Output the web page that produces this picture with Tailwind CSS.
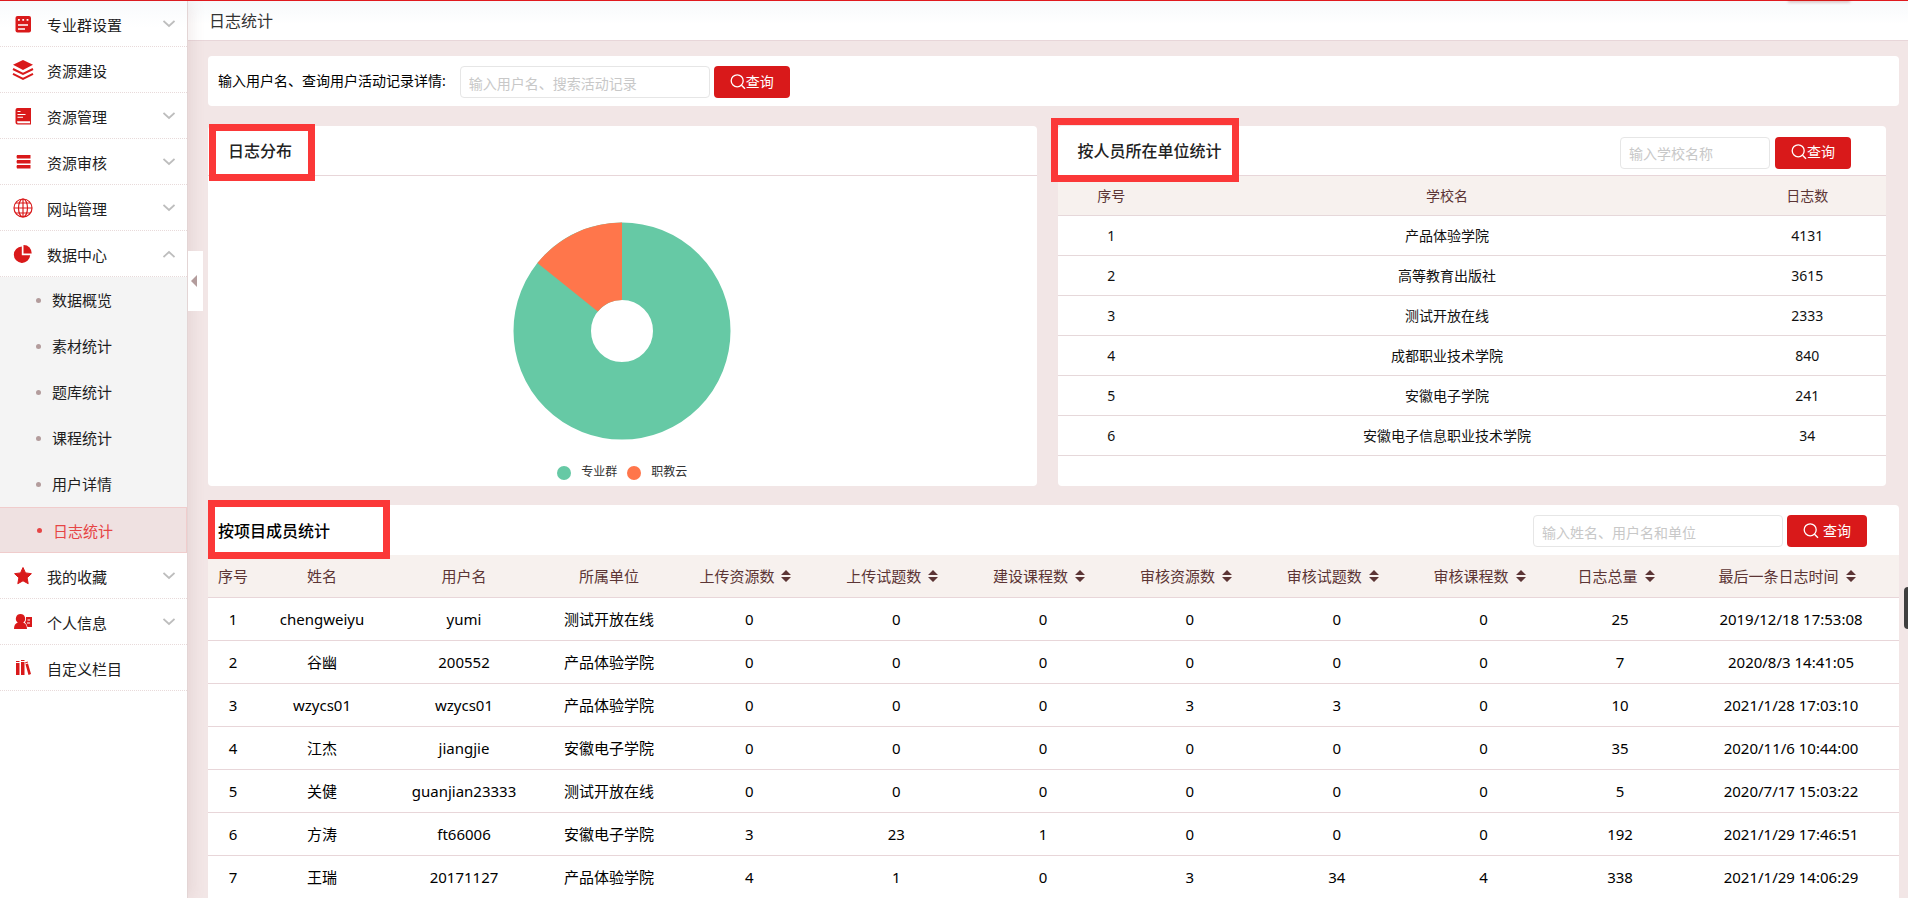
<!DOCTYPE html>
<html lang="zh-CN">
<head>
<meta charset="utf-8">
<meta name="viewport" content="width=device-width, initial-scale=1">
<title>日志统计</title>
<script src="https://cdn.jsdelivr.net/npm/@tailwindcss/browser@4"></script>
</head>
<body class="flex h-screen flex-col overflow-hidden bg-[#f2e6e6] font-['Noto_Sans','Noto_Sans_CJK_SC',sans-serif] text-[15px] text-black">
<svg class="hidden" aria-hidden="true">
  <symbol id="down" viewBox="0 0 12 8"><path d="M.5 1 6 6l5.500-5" fill="none" stroke="#bdbdbd" stroke-width="1.700"/></symbol>
  <symbol id="up" viewBox="0 0 12 8"><path d="M.5 7 6 2l5.500 5" fill="none" stroke="#bdbdbd" stroke-width="1.700"/></symbol>
  <symbol id="search" viewBox="0 0 16 16"><circle cx="7.200" cy="6.800" r="6" fill="none" stroke="currentColor" stroke-width="1.300"/><path d="m11.500 11.200 3.500 3.500" stroke="currentColor" stroke-width="1.400"/></symbol>
  <symbol id="sort" viewBox="0 0 10 12"><path d="M5 0l5 5H0zM5 12l5-5H0z" fill="#5c3535"/></symbol>
</svg>
<div class="relative z-10 h-px shrink-0 bg-[#e0191e]">
  <div class="absolute top-0 right-[58px] h-px w-[62px] bg-[#d71718] shadow-[0_1px_3px_rgba(120,20,20,0.6)]"></div>
</div>
<div class="flex min-h-0 flex-1">
  <aside class="relative z-10 w-[188px] shrink-0 border-r border-[#e3d5d5] bg-white bg-linear-to-b from-[#f8fafc] to-white to-3% shadow-[3px_0_14px_rgba(150,90,90,0.12)]">
    <nav class="[&_a]:text-[#1e1e1e]">
      <a href="#" class="flex h-[46px] items-center border-b border-dotted border-[#e8dada] pr-3 pl-3">
        <svg class="h-[22px] w-[22px]" viewBox="0 0 22 22"><rect x="3.500" y="3" width="15.500" height="16.500" rx="2" fill="#d9191a"/><path d="M6 6.800h1.800M10.300 6.800h1.800M14.600 6.800h1.800" stroke="#fff" stroke-width="1.800"/><path d="M6 12h10M6 16h7" stroke="#fff" stroke-width="1.300"/></svg>
        <span class="ml-[13px] flex-1 pt-1">专业群设置</span><svg class="h-2 w-3"><use href="#down"/></svg>
      </a>
      <a href="#" class="flex h-[46px] items-center border-b border-dotted border-[#e8dada] pr-3 pl-3">
        <svg class="h-[22px] w-[22px]" viewBox="0 0 22 22"><path d="M11 1l10 4.800L11 11 1 5.800z" fill="#d9191a"/><path d="M1 10l10 5 10-5M1 14.800l10 5 10-5" fill="none" stroke="#d9191a" stroke-width="2"/></svg>
        <span class="ml-[13px] flex-1 pt-1">资源建设</span>
      </a>
      <a href="#" class="flex h-[46px] items-center border-b border-dotted border-[#e8dada] pr-3 pl-3">
        <svg class="h-[22px] w-[22px]" viewBox="0 0 22 22"><path d="M5.500 3H19v16.500H5.500A2 2 0 0 1 3.500 17.500V5a2 2 0 0 1 2-2z" fill="#d9191a"/><path d="M5.500 6.500h3M5.500 9.500h8M5.500 12.300h5.500" stroke="#fff" stroke-width="1.100"/><path d="M5 16.300h13v2H5.500z" fill="#fff"/></svg>
        <span class="ml-[13px] flex-1 pt-1">资源管理</span><svg class="h-2 w-3"><use href="#down"/></svg>
      </a>
      <a href="#" class="flex h-[46px] items-center border-b border-dotted border-[#e8dada] pr-3 pl-3">
        <svg class="h-[22px] w-[22px]" viewBox="0 0 22 22"><path d="M5 4h13.500v3.500H5q-1-1.700 0-3.500zM5 9h13.500v3.500H5q-1-1.700 0-3.500zM5 14h13.500v3.500H5q-1-1.700 0-3.500z" fill="#d9191a"/></svg>
        <span class="ml-[13px] flex-1 pt-1">资源审核</span><svg class="h-2 w-3"><use href="#down"/></svg>
      </a>
      <a href="#" class="flex h-[46px] items-center border-b border-dotted border-[#e8dada] pr-3 pl-3">
        <svg class="h-[22px] w-[22px]" viewBox="0 0 22 22" fill="none" stroke="#d9191a" stroke-width="1.200"><circle cx="11" cy="11" r="9"/><ellipse cx="11" cy="11" rx="4.500" ry="9"/><path d="M11 2v18M2 11h18M4 6h14M4 16h14"/></svg>
        <span class="ml-[13px] flex-1 pt-1">网站管理</span><svg class="h-2 w-3"><use href="#down"/></svg>
      </a>
      <a href="#" class="flex h-[46px] items-center border-b border-dotted border-[#e8dada] pr-3 pl-3">
        <svg class="h-[22px] w-[22px]" viewBox="0 0 22 22" fill="#d9191a"><path d="M9.800 3.500v8.800h8.400A8.200 8.200 0 1 1 9.800 3.500z"/><path d="M11.500 2a8 8 0 0 1 8.200 8.600h-8.200z"/></svg>
        <span class="ml-[13px] flex-1 pt-1">数据中心</span><svg class="h-2 w-3"><use href="#up"/></svg>
      </a>
      <div class="bg-[#f4f4f4]">
        <a href="#" class="flex h-[46px] items-center gap-[11px] pl-9"><i class="size-[5px] rounded-full bg-[#b39c9c]"></i><span>数据概览</span></a>
        <a href="#" class="flex h-[46px] items-center gap-[11px] pl-9"><i class="size-[5px] rounded-full bg-[#b39c9c]"></i><span>素材统计</span></a>
        <a href="#" class="flex h-[46px] items-center gap-[11px] pl-9"><i class="size-[5px] rounded-full bg-[#b39c9c]"></i><span>题库统计</span></a>
        <a href="#" class="flex h-[46px] items-center gap-[11px] pl-9"><i class="size-[5px] rounded-full bg-[#b39c9c]"></i><span>课程统计</span></a>
        <a href="#" class="flex h-[46px] items-center gap-[11px] pl-9"><i class="size-[5px] rounded-full bg-[#b39c9c]"></i><span>用户详情</span></a>
        <a href="#" aria-current="page" class="flex h-[46px] items-center gap-[11px] border border-l-0 border-[#f0cccc] bg-[#efe1e1] pl-[37px]"><i class="size-[5px] rounded-full bg-[#e64545]"></i><span class="pt-0.5 text-[#e64545]">日志统计</span></a>
      </div>
      <a href="#" class="flex h-[46px] items-center border-b border-dotted border-[#e8dada] pr-3 pl-3">
        <svg class="h-[22px] w-[22px]" viewBox="0 0 22 22"><path d="M11 2.500l2.500 5.400 5.900.8-4.300 4.100 1.100 5.900-5.200-2.900-5.200 2.900 1.100-5.900-4.300-4.100 5.900-.8z" fill="#d9191a" stroke="#d9191a" stroke-linejoin="round"/></svg>
        <span class="ml-[13px] flex-1 pt-1">我的收藏</span><svg class="h-2 w-3"><use href="#down"/></svg>
      </a>
      <a href="#" class="flex h-[46px] items-center border-b border-dotted border-[#e8dada] pr-3 pl-3">
        <svg class="h-[22px] w-[22px]" viewBox="0 0 22 22" fill="#d9191a"><path d="M8.500 3a4.700 4.700 0 0 1 2.700 8.500c2.600 1 3.800 3 3.800 6.500H2c0-3.500 1.200-5.500 3.800-6.500A4.700 4.700 0 0 1 8.500 3z"/><path d="M14 6h6v10h-4.500q-.6-3-2.500-4.500Q14.500 9 14 6z"/><path d="M15.500 9H18M15 12h3" stroke="#fff" stroke-width="1.200"/></svg>
        <span class="ml-[13px] flex-1 pt-1">个人信息</span><svg class="h-2 w-3"><use href="#down"/></svg>
      </a>
      <a href="#" class="flex h-[46px] items-center border-b border-dotted border-[#e8dada] pr-3 pl-3">
        <svg class="h-[22px] w-[22px]" viewBox="0 0 22 22" fill="#d9191a"><path d="M4 4h3.500v1H4zM4 6h3.500v12H4zM9 3h3.500v1H9zM9 5h3.500v13H9zM13 5.500l2.700-1 .3 1-2.700 1zM13.500 7.300l2.500-.9 3 10.600-2.500.9z"/></svg>
        <span class="ml-[13px] flex-1 pt-1">自定义栏目</span>
      </a>
    </nav>
    <button aria-label="收起菜单" class="absolute top-[250px] -right-4 flex h-[60px] w-[15px] items-center bg-white pl-[3px]"><svg class="h-3 w-1.5" viewBox="0 0 6 12"><path d="M6 0v12L0 6z" fill="#b39c9c"/></svg></button>
  </aside>

  <main class="min-w-0 flex-1">
    <header class="flex h-10 items-center border-b border-[#e8d6d9] bg-linear-to-b from-[#f7f9fb] to-white to-60% pl-[21px] text-base text-[#333]"><h1>日志统计</h1></header>
    <div class="pt-[15px] pr-[9px] pl-5">
      <form class="flex h-[50px] items-center rounded bg-white pl-2.5 text-sm">
        <label for="user">输入用户名、查询用户活动记录详情:</label>
        <input id="user" type="text" placeholder="输入用户名、搜索活动记录" class="mt-0.5 ml-3.5 h-8 w-[250px] rounded border border-[#e6e6e6] px-2 pt-0.5 placeholder:text-[#c8c8c8]">
        <button type="button" class="mt-0.5 ml-1 flex h-8 w-[76px] items-center justify-center rounded bg-[#d9191a] text-white"><svg class="size-4"><use href="#search"/></svg>查询</button>
      </form>

      <div class="mt-5 mr-[13px] grid h-[360px] grid-cols-2 gap-[21px]">
        <section class="flex flex-col rounded bg-white">
          <div class="relative flex h-[50px] shrink-0 items-center border-b border-[#e8d6d9] pl-5">
            <h2 class="text-base font-medium text-[#222]">日志分布</h2>
            <div class="absolute -top-0.5 left-px h-[57px] w-[106px] border-7 border-[#fb3838]"></div>
          </div>
          <div class="flex flex-1 flex-col items-center">
            <svg class="mt-[46px] size-[218px]" viewBox="-109 -109 218 218" role="img" aria-label="专业群与职教云日志占比">
              <circle r="69.750" fill="none" stroke="#66c9a5" stroke-width="77.500"/>
              <path d="M0-108.500A108.500 108.500 0 0 0-84.600-67.900L-24.200-19.400A31 31 0 0 1 0-31z" fill="#ff764b"/>
            </svg>
            <div class="mt-6 flex items-center text-xs text-[#333]">
              <i class="mt-0.5 size-3.5 rounded-full bg-[#66c9a5]"></i><span class="ml-2.5">专业群</span>
              <i class="mt-0.5 ml-2.5 size-3.5 rounded-full bg-[#ff764b]"></i><span class="ml-2.5">职教云</span>
            </div>
          </div>
        </section>

        <section class="rounded bg-white">
          <div class="relative flex h-[50px] items-center border-b border-[#e8d6d9] pr-[35px] pl-5 text-sm">
            <h2 class="text-base font-medium text-[#222]">按人员所在单位统计</h2>
            <div class="absolute -top-2 -left-[7px] h-16 w-[188px] border-7 border-[#fb3838]"></div>
            <input type="text" aria-label="学校名称" placeholder="输入学校名称" class="mt-1 ml-auto h-8 w-[150px] rounded border border-[#e6e6e6] px-2 pt-0.5 placeholder:text-[#c8c8c8]">
            <button type="button" class="mt-1 ml-[5px] flex h-8 w-[76px] items-center justify-center rounded bg-[#d9191a] pb-0.5 text-white"><svg class="size-4"><use href="#search"/></svg>查询</button>
          </div>
          <table class="w-full table-fixed border-separate border-spacing-0 text-center text-sm text-[#111] [&_td]:h-10 [&_td]:border-b [&_td]:border-[#e6d8da] [&_td]:p-0 [&_th]:h-10 [&_th]:border-b [&_th]:border-[#e6d8da] [&_th]:p-0">
            <colgroup><col class="w-[13%]"><col><col class="w-[19%]"></colgroup>
            <thead class="bg-[#f7f1ee] text-[#5c3535] [&_th]:font-normal"><tr><th>序号</th><th>学校名</th><th>日志数</th></tr></thead>
            <tbody>
              <tr><td>1</td><td>产品体验学院</td><td>4131</td></tr>
              <tr><td>2</td><td>高等教育出版社</td><td>3615</td></tr>
              <tr><td>3</td><td>测试开放在线</td><td>2333</td></tr>
              <tr><td>4</td><td>成都职业技术学院</td><td>840</td></tr>
              <tr><td>5</td><td>安徽电子学院</td><td>241</td></tr>
              <tr><td>6</td><td>安徽电子信息职业技术学院</td><td>34</td></tr>
            </tbody>
          </table>
        </section>
      </div>

      <section class="mt-[19px] rounded-t bg-white">
        <div class="relative flex h-[50px] items-center pr-8 pl-2.5 text-sm">
          <h2 class="pt-0.5 text-base font-medium">按项目成员统计</h2>
          <div class="absolute -top-[5px] left-0 h-[59px] w-[182px] border-7 border-[#fb3838]"></div>
          <input type="text" aria-label="姓名、用户名和单位" placeholder="输入姓名、用户名和单位" class="mt-0.5 ml-auto h-8 w-[250px] rounded border border-[#e6e6e6] px-2 pt-0.5 placeholder:text-[#c8c8c8]">
          <button type="button" class="mt-0.5 ml-1 flex h-8 w-20 items-center justify-center gap-1 rounded bg-[#d9191a] text-white"><svg class="size-4"><use href="#search"/></svg>查询</button>
        </div>
        <table class="w-full table-fixed border-separate border-spacing-0 text-center [&_td]:h-[43px] [&_td]:border-b [&_td]:border-[#e8d6d9] [&_td]:p-0 [&_th]:h-[43px] [&_th]:border-b [&_th]:border-[#e8d6d9] [&_th]:p-0">
          <colgroup><col class="w-[50px]"><col class="w-[128px]"><col class="w-[156px]"><col class="w-[134px]"><col><col><col><col><col><col><col class="w-[126px]"><col class="w-[216px]"></colgroup>
          <thead class="bg-[#f7f1ee] text-[#5c3535] [&_button]:inline-flex [&_button]:items-center [&_button]:gap-[7px] [&_button]:pr-2 [&_svg]:h-3 [&_svg]:w-2.5 [&_th]:font-normal">
            <tr><th>序号</th><th>姓名</th><th>用户名</th><th>所属单位</th>
            <th><button>上传资源数<svg><use href="#sort"/></svg></button></th>
            <th><button>上传试题数<svg><use href="#sort"/></svg></button></th>
            <th><button>建设课程数<svg><use href="#sort"/></svg></button></th>
            <th><button>审核资源数<svg><use href="#sort"/></svg></button></th>
            <th><button>审核试题数<svg><use href="#sort"/></svg></button></th>
            <th><button>审核课程数<svg><use href="#sort"/></svg></button></th>
            <th><button>日志总量<svg><use href="#sort"/></svg></button></th>
            <th><button>最后一条日志时间<svg><use href="#sort"/></svg></button></th></tr>
          </thead>
          <tbody>
            <tr><td>1</td><td>chengweiyu</td><td>yumi</td><td>测试开放在线</td><td>0</td><td>0</td><td>0</td><td>0</td><td>0</td><td>0</td><td>25</td><td>2019/12/18 17:53:08</td></tr>
            <tr><td>2</td><td>谷幽</td><td>200552</td><td>产品体验学院</td><td>0</td><td>0</td><td>0</td><td>0</td><td>0</td><td>0</td><td>7</td><td>2020/8/3 14:41:05</td></tr>
            <tr><td>3</td><td>wzycs01</td><td>wzycs01</td><td>产品体验学院</td><td>0</td><td>0</td><td>0</td><td>3</td><td>3</td><td>0</td><td>10</td><td>2021/1/28 17:03:10</td></tr>
            <tr><td>4</td><td>江杰</td><td>jiangjie</td><td>安徽电子学院</td><td>0</td><td>0</td><td>0</td><td>0</td><td>0</td><td>0</td><td>35</td><td>2020/11/6 10:44:00</td></tr>
            <tr><td>5</td><td>关健</td><td>guanjian23333</td><td>测试开放在线</td><td>0</td><td>0</td><td>0</td><td>0</td><td>0</td><td>0</td><td>5</td><td>2020/7/17 15:03:22</td></tr>
            <tr><td>6</td><td>方涛</td><td>ft66006</td><td>安徽电子学院</td><td>3</td><td>23</td><td>1</td><td>0</td><td>0</td><td>0</td><td>192</td><td>2021/1/29 17:46:51</td></tr>
            <tr><td>7</td><td>王瑞</td><td>20171127</td><td>产品体验学院</td><td>4</td><td>1</td><td>0</td><td>3</td><td>34</td><td>4</td><td>338</td><td>2021/1/29 14:06:29</td></tr>
          </tbody>
        </table>
      </section>
    </div>
  </main>
</div>
<div class="fixed top-[587px] right-0 h-[42px] w-1 rounded-l bg-[#3f3f3f]"></div>
</body>
</html>
